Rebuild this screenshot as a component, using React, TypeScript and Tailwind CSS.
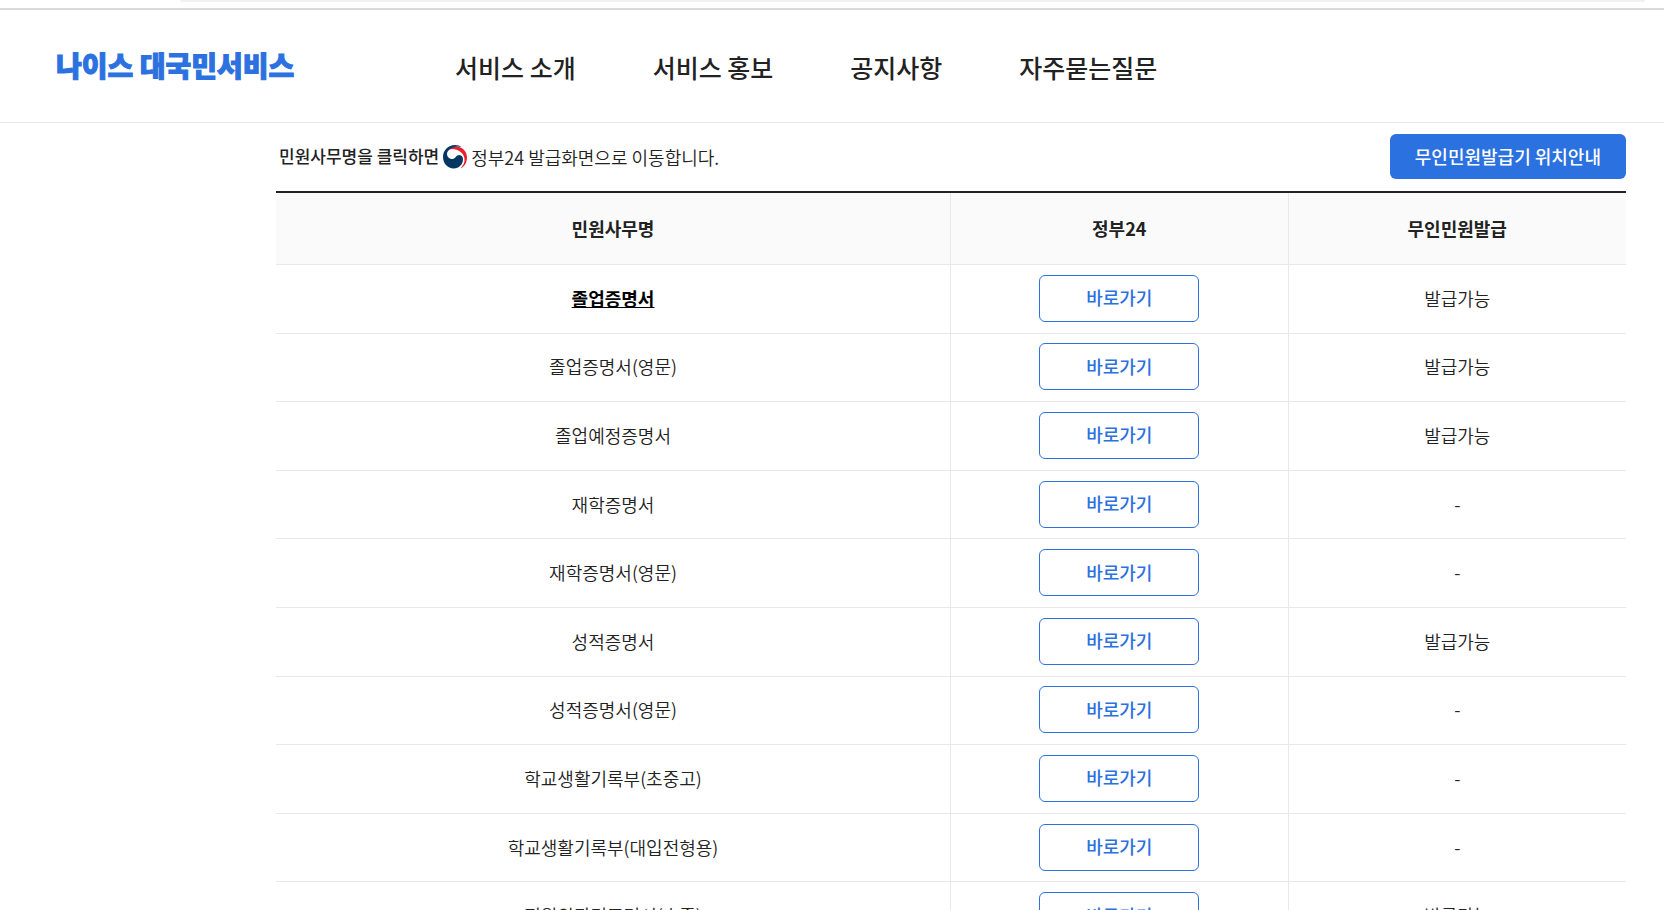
import React from 'react'

const NAV = ['서비스 소개', '서비스 홍보', '공지사항', '자주묻는질문']

const CERTS = [
  {name:'졸업증명서',kiosk:true,active:true},
  {name:'졸업증명서(영문)',kiosk:true},
  {name:'졸업예정증명서',kiosk:true},
  {name:'재학증명서',kiosk:false},
  {name:'재학증명서(영문)',kiosk:false},
  {name:'성적증명서',kiosk:true},
  {name:'성적증명서(영문)',kiosk:false},
  {name:'학교생활기록부(초중고)',kiosk:false},
  {name:'학교생활기록부(대입전형용)',kiosk:false},
  {name:'정원외관리증명서(초중)',kiosk:true},
]

function GovMark() {
  return (
    <svg viewBox="0 0 24 24" className="w-6 h-6 shrink-0" aria-hidden="true">
      <path d="M5.500 4.500C8 2 11 1.200 14 1.600C20 2.400 24 7 24 12.500C24 17.500 21.500 21.500 17.500 23.500C20.800 20 22.200 16.500 21.300 12.500C19.800 6.500 13 2.500 5.500 4.500Z" fill="#e8202f"/>
      <path d="M12 0C14.500 0 17 .8 18.500 2C14.500 .8 8.500 1.600 5 6C3.300 8.300 4 11.500 6 13C8.500 14.800 11 14 12.500 12.200C13.800 10.800 14.800 10 16.500 10C18.800 10.200 20 12 20 14.300C20 19.500 15.800 23.500 10.800 23.500C4.500 23.500 0 18.300 0 12C0 5.200 5.300 0 12 0Z" fill="#063763"/>
    </svg>
  )
}

export default function App() {
  return (
    <div className="h-screen overflow-hidden bg-white text-[#222] font-['Noto_Sans_CJK_KR','Noto_Sans',sans-serif]">
      {/* Browser bar edge */}
      <div className="h-2.5 border-b-2 border-[#dadada] pl-[180px] pr-[19px]">
        <div className="h-0.5 rounded-b-full bg-[#f1f1f1]"/>
      </div>

      <header className="h-[113px] flex items-center border-b border-[#e8e8e8] pl-14">
        <a href="#" className="w-[399px] shrink-0 pb-0.5 text-[28px] leading-10 font-black text-[#2b71df] [-webkit-text-stroke:1px_#2b71df]">나이스 대국민서비스</a>
        <nav className="flex gap-[77px] pt-0.5 text-[25px] leading-9 font-medium">
          {NAV.map(n => <a key={n} href="#" className="whitespace-nowrap">{n}</a>)}
        </nav>
      </header>

      <main className="pl-[276px] pr-[38px]">
        <div className="h-[68px] flex items-center justify-between pl-[3px] pb-px">
          <p className="flex items-center gap-1 text-lg font-[350]">
            <strong className="text-[17px] font-medium">민원사무명을 클릭하면</strong>
            <GovMark/>
            <span>정부24 발급화면으로 이동합니다.</span>
          </p>
          <button className="h-[45px] px-[25px] pb-0.5 rounded-md bg-[#2b71df] text-white text-lg font-medium">무인민원발급기 위치안내</button>
        </div>

        <table className="w-full h-[760px] table-fixed border-separate border-spacing-0 border-t-2 border-[#222] text-center text-lg">
          <thead>
            <tr className="h-[72px] bg-[#fafafa]">
              <th scope="col" className="w-1/2 pb-0.5 font-bold border-b border-r border-[#e8e8e8]">민원사무명</th>
              <th scope="col" className="w-1/4 pb-0.5 font-bold border-b border-r border-[#e8e8e8]">정부24</th>
              <th scope="col" className="w-1/4 pb-0.5 font-bold border-b border-[#e8e8e8]">무인민원발급</th>
            </tr>
          </thead>
          <tbody>
            {CERTS.map(c => (
              <tr key={c.name} className="font-[350]">
                <td className="pb-0.5 border-b border-r border-[#e8e8e8]"><a href="#" className={c.active?'font-bold text-black underline':''}>{c.name}</a></td>
                <td className="pb-px border-b border-r border-[#e8e8e8]">
                  <button className="w-40 h-[47px] pb-0.5 rounded-md border border-[#2b71df] bg-white text-[#2b71df] text-lg font-medium align-middle">바로가기</button>
                </td>
                <td className="pb-0.5 border-b border-[#e8e8e8]">{c.kiosk?'발급가능':'-'}</td>
              </tr>
            ))}
          </tbody>
        </table>
      </main>
    </div>
  )
}
